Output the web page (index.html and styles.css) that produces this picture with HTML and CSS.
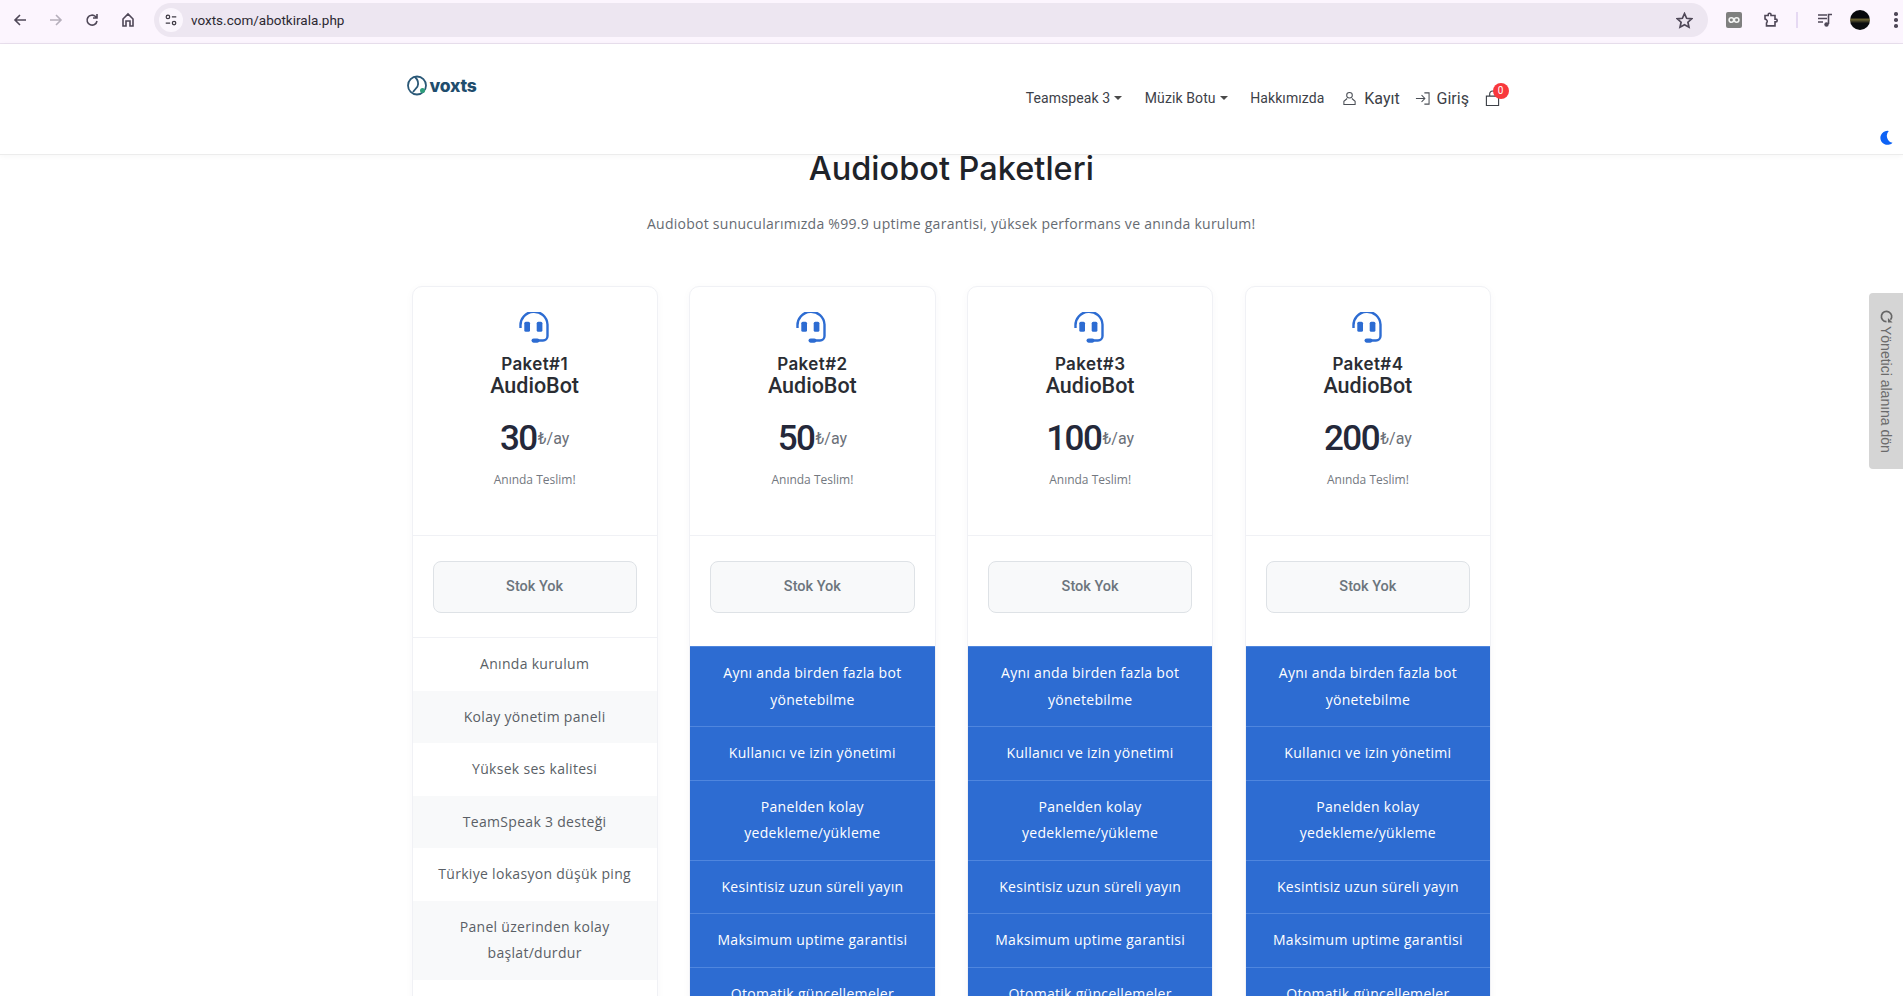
FILE: index.html
```html
<!DOCTYPE html>
<html lang="tr">
<head>
  <meta charset="UTF-8">
  <title>Audiobot Paketleri - voxts</title>
  <link rel="stylesheet" href="styles.css">
</head>
<body>
  <!-- browser chrome -->
  <div class="browser-bar">
    <div class="browser-nav">
      <svg class="bicon" viewBox="0 0 16 16"><path d="M14 8H3M8 3 3 8l5 5"/></svg>
      <svg class="bicon faded" viewBox="0 0 16 16"><path d="M2 8h11M8 3l5 5-5 5"/></svg>
      <svg class="bicon" viewBox="0 0 16 16"><path d="M13 9a5 5 0 1 1-1.5-4.5L13 6M13 2v4H9"/></svg>
      <svg class="bicon" viewBox="0 0 16 16"><path d="M3 14V7l5-5 5 5v7h-3V9H6v5z"/></svg>
    </div>
    <div class="address">
      <span class="site-info">
        <svg viewBox="0 0 16 16"><circle cx="4.5" cy="4.5" r="2"/><path d="M9 4.5h5M2 11.5h5"/><circle cx="11.5" cy="11.5" r="2"/></svg>
      </span>
      <span class="url">voxts.com/abotkirala.php</span>
      <svg class="bicon star" viewBox="0 0 16 16"><path d="m8 1.500 2 4.400 4.700.5-3.500 3.200 1 4.700L8 11.900l-4.200 2.400 1-4.700-3.500-3.200L6 5.900z"/></svg>
    </div>
    <div class="browser-tools">
      <span class="ext-box"><svg viewBox="0 0 16 16"><circle cx="5" cy="8" r="2.600"/><circle cx="11" cy="8" r="2.600"/></svg></span>
      <svg class="bicon puzzle" viewBox="0 0 16 16"><path d="M2 3.500h3.200V2.600a1.400 1.400 0 0 1 2.800 0v.9h4v3.600h.8a1.400 1.400 0 0 1 0 2.800H12v4H3.500V11c1-.8 1-2.500 0-3.200L2 7z"/></svg>
      <span class="tool-sep"></span>
      <svg class="bicon music" viewBox="0 0 16 16"><path d="M1 3h9M1 6.500h9M1 10h5M11.500 12V2.500H15"/><circle cx="9.500" cy="12.500" r="2.200"/></svg>
      <span class="avatar"></span>
      <span class="dots"><i></i><i></i><i></i></span>
    </div>
  </div>

  <header class="site-header">
    <div class="header-inner">
      <a class="logo" href="#">
        <svg viewBox="0 0 20 22"><circle cx="10" cy="10.500" r="9"/><path d="M8 2c3 3 4 6 2.500 9.500L6 17"/><circle class="logo-dot" cx="15.500" cy="15.500" r="2.500"/></svg>
        <span>voxts</span>
      </a>
      <nav class="main-nav">
        <a href="#" class="nav-link caret">Teamspeak 3</a>
        <a href="#" class="nav-link caret">Müzik Botu</a>
        <a href="#" class="nav-link">Hakkımızda</a>
        <a href="#" class="nav-link big signup">
          <svg viewBox="0 0 16 16"><circle cx="8" cy="4.500" r="3"/><path d="M5.500 8 2 11v3.500h12V11l-3.500-3"/></svg>Kayıt
        </a>
        <a href="#" class="nav-link big login">
          <svg viewBox="0 0 16 16"><path d="M1 8h9M7 4.500 10.500 8 7 11.500M10 2h5v12h-5"/></svg>Giriş
        </a>
        <a href="#" class="cart">
          <svg viewBox="0 0 16 18"><path d="M1.500 6.500h13v10h-13zM5 6.500V4a3 3 0 0 1 6 0v2.500"/></svg>
          <span class="cart-badge">0</span>
        </a>
      </nav>
    </div>
  </header>

  <button class="theme-toggle" type="button" aria-label="Tema">
    <svg viewBox="0 0 16 16"><path d="M11.500 1A7.500 7.500 0 1 0 15.500 13.500 7.500 7.500 0 0 1 11.500 1z"/></svg>
  </button>

  <a href="#" class="admin-tab">
    <svg viewBox="0 0 16 16"><path d="M13.500 8A5.500 5.500 0 1 1 11.500 3.700"/><path class="fill" d="M14.500 1.500v5h-5z"/></svg>
    <span>Yönetici alanına dön</span>
  </a>

  <main class="page">
    <h1 class="page-title">Audiobot Paketleri</h1>
    <p class="page-sub">Audiobot sunucularımızda %99.9 uptime garantisi, yüksek performans ve anında kurulum!</p>

    <div class="plans">
      <div class="plan">
        <div class="plan-head">
          <svg class="plan-icon" viewBox="0 0 32 32"><use href="#headset"/></svg>
          <div class="plan-no">Paket#1</div>
          <div class="plan-name">AudioBot</div>
          <div class="plan-price"><b>30</b>₺/ay</div>
          <div class="plan-note">Anında Teslim!</div>
        </div>
        <div class="plan-buy"><span class="stock-btn">Stok Yok</span></div>
        <ul class="features">
          <li>Anında kurulum</li>
          <li>Kolay yönetim paneli</li>
          <li>Yüksek ses kalitesi</li>
          <li>TeamSpeak 3 desteği</li>
          <li>Türkiye lokasyon düşük ping</li>
          <li>Panel üzerinden kolay başlat/durdur</li>
        </ul>
      </div>

      <div class="plan plan-pro">
        <div class="plan-head">
          <svg class="plan-icon" viewBox="0 0 32 32"><use href="#headset"/></svg>
          <div class="plan-no">Paket#2</div>
          <div class="plan-name">AudioBot</div>
          <div class="plan-price"><b>50</b>₺/ay</div>
          <div class="plan-note">Anında Teslim!</div>
        </div>
        <div class="plan-buy"><span class="stock-btn">Stok Yok</span></div>
        <ul class="features">
          <li>Aynı anda birden fazla bot yönetebilme</li>
          <li>Kullanıcı ve izin yönetimi</li>
          <li>Panelden kolay yedekleme/yükleme</li>
          <li>Kesintisiz uzun süreli yayın</li>
          <li>Maksimum uptime garantisi</li>
          <li>Otomatik güncellemeler</li>
        </ul>
      </div>

      <div class="plan plan-pro">
        <div class="plan-head">
          <svg class="plan-icon" viewBox="0 0 32 32"><use href="#headset"/></svg>
          <div class="plan-no">Paket#3</div>
          <div class="plan-name">AudioBot</div>
          <div class="plan-price"><b>100</b>₺/ay</div>
          <div class="plan-note">Anında Teslim!</div>
        </div>
        <div class="plan-buy"><span class="stock-btn">Stok Yok</span></div>
        <ul class="features">
          <li>Aynı anda birden fazla bot yönetebilme</li>
          <li>Kullanıcı ve izin yönetimi</li>
          <li>Panelden kolay yedekleme/yükleme</li>
          <li>Kesintisiz uzun süreli yayın</li>
          <li>Maksimum uptime garantisi</li>
          <li>Otomatik güncellemeler</li>
        </ul>
      </div>

      <div class="plan plan-pro">
        <div class="plan-head">
          <svg class="plan-icon" viewBox="0 0 32 32"><use href="#headset"/></svg>
          <div class="plan-no">Paket#4</div>
          <div class="plan-name">AudioBot</div>
          <div class="plan-price"><b>200</b>₺/ay</div>
          <div class="plan-note">Anında Teslim!</div>
        </div>
        <div class="plan-buy"><span class="stock-btn">Stok Yok</span></div>
        <ul class="features">
          <li>Aynı anda birden fazla bot yönetebilme</li>
          <li>Kullanıcı ve izin yönetimi</li>
          <li>Panelden kolay yedekleme/yükleme</li>
          <li>Kesintisiz uzun süreli yayın</li>
          <li>Maksimum uptime garantisi</li>
          <li>Otomatik güncellemeler</li>
        </ul>
      </div>
    </div>
  </main>

  <svg class="sprite" aria-hidden="true">
    <symbol id="headset" viewBox="0 0 32 32">
      <path d="M1.500 16v-2a13.500 13.500 0 0 1 27-1.500V24a4.500 4.500 0 0 1-4.500 4.500h-5" fill="none" stroke="currentColor" stroke-width="2.400"/>
      <rect x="5.300" y="9.700" width="5.700" height="10" rx="1.500" fill="currentColor"/>
      <rect x="17.700" y="9.700" width="5.700" height="10" rx="1.500" fill="currentColor"/>
      <rect x="12.500" y="26.500" width="8" height="4.200" rx="2.100" fill="currentColor"/>
    </symbol>
  </svg>
</body>
</html>
```

FILE: styles.css
```css
:root {
  --blue: #2d6cd2; --blue-line: #4f86de; --text-dark: #2b2f36; --text-main: #5a5f66;
  --text-muted: #6c757d; --border-color: #f0f1f5; --chrome-bg: #fcf5fe; --chrome-pill: #ede6f1;
}
html { box-sizing: border-box; }
*, *:before, *:after { box-sizing: inherit; }
body {
  margin: 0; height: 100vh; overflow: hidden; background: #fff; color: var(--text-main);
  font-family: "Open Sans", Arial, sans-serif; position: relative;
}
a { text-decoration: none; color: inherit; }
.sprite { width: 0; height: 0; display: block; }

/* browser chrome */
.browser-bar {
  height: 44px; display: flex; align-items: center; background: var(--chrome-bg);
  border-bottom: 1px solid #e9e0ee; padding: 0 0 3px 12px;
}
.bicon { width: 16px; height: 16px; fill: none; stroke: #4f4858; stroke-width: 1.600; flex-shrink: 0; }
.bicon.faded { stroke: #b5afbb; }
.browser-nav { display: flex; gap: 20px; width: 142px; }
.address {
  width: 1554px; height: 34px; border-radius: 17px; background: var(--chrome-pill);
  display: flex; align-items: center; padding: 0 15px 0 5px;
}
.site-info {
  width: 24px; height: 24px; border-radius: 50%; background: #fbf6fd;
  display: flex; align-items: center; justify-content: center;
}
.site-info svg { width: 14px; height: 14px; fill: none; stroke: #3e3a44; stroke-width: 1.400; }
.url { margin-left: 8px; font: 13.500px Roboto, Arial, sans-serif; color: #2c2832; flex: 1; }
.star { width: 17px; height: 17px; }
.browser-tools { display: flex; align-items: center; padding-left: 18px; }
.ext-box {
  width: 16px; height: 16px; border-radius: 2px; background: #7f7f7f;
  display: flex; align-items: center; justify-content: center;
}
.ext-box svg { width: 14px; height: 14px; fill: none; stroke: #f4f4f4; stroke-width: 1.800; }
.puzzle { margin-left: 21px; }
.tool-sep { width: 2px; height: 16px; background: #e6d9f3; margin: 0 19px 0 17px; }
.music circle { fill: #4f4858; stroke: none; }
.avatar {
  width: 20px; height: 20px; border-radius: 50%; margin-left: 17px;
  background: linear-gradient(#07090c 38%, #6a6232 48%, #4b4628 54%, #0a0c0f 66%);
}
.dots { display: flex; flex-direction: column; gap: 2.500px; margin-left: 24px; }
.dots i { width: 3.500px; height: 3.500px; border-radius: 50%; background: #4f4858; }

/* site header */
.site-header {
  height: 111px; background: #fff; border-bottom: 1px solid #ececec;
  box-shadow: 0 1px 6px rgba(0, 0, 0, 0.04); position: relative; z-index: 2;
}
.header-inner { width: 1110px; margin: 0 auto; display: flex; justify-content: space-between; padding: 31px 7px 0 10px; }
.logo { display: flex; align-items: center; gap: 3px; height: 21px; color: #1f4d6d; font: 800 17.500px Inter, Arial, sans-serif; letter-spacing: -0.2px; }
.logo svg { width: 20px; height: 22px; fill: none; stroke: #2a5877; stroke-width: 1.800; }
.logo svg .logo-dot { fill: #2f9e7b; stroke: none; }
.main-nav { display: flex; align-items: center; gap: 22.500px; height: 46px; font: 14px Roboto, Arial, sans-serif; color: #3d4148; }
.nav-link { display: flex; align-items: center; gap: 8px; white-space: nowrap; letter-spacing: 0.100px; }
.nav-link.caret:after {
  content: ""; border-top: 4px solid #4a4a4a; border-left: 4px solid transparent;
  border-right: 4px solid transparent; margin-left: -4px;
}
.nav-link.big { font-size: 16px; gap: 7px; letter-spacing: 0; }
.nav-link.signup { margin-left: -4.700px; }
.nav-link.login { margin-left: -7.700px; }
.nav-link svg { width: 15px; height: 15px; fill: none; stroke: #4a4e55; stroke-width: 1.100; }
.cart { position: relative; display: flex; margin-left: -6.900px; }
.cart svg { width: 15px; height: 17px; fill: none; stroke: #3d4148; stroke-width: 1.200; }
.cart-badge {
  position: absolute; top: -7px; left: 8px; width: 16px; height: 16px; border-radius: 50%;
  background: #f8383c; color: #fff; font-size: 10px; line-height: 16px; text-align: center;
}
.theme-toggle {
  position: absolute; top: 118px; right: 0; width: 35px; height: 36px; background: #fff;
  border: 0; padding: 0; z-index: 3; display: flex; align-items: center; justify-content: center;
}
.theme-toggle svg { width: 15px; height: 15px; fill: #0d62f5; margin: 2px 0 0; }
.admin-tab {
  position: absolute; top: 293px; right: 0; width: 34px; height: 176px; z-index: 3;
  background: #d5d5d5; border-radius: 4px 0 0 4px; color: #6b6b6b;
  font: 14px "Liberation Sans", Arial, sans-serif;
  display: flex; flex-direction: column; align-items: center; padding-top: 16px; gap: 2px;
}
.admin-tab span { writing-mode: vertical-rl; }
.admin-tab svg { width: 15px; height: 15px; fill: none; stroke: #666; stroke-width: 1.800; transform: rotate(90deg); }
.admin-tab svg .fill { fill: #666; stroke: none; }

/* page */
.page { width: 1080px; margin: 0 auto; padding-right: 0.500px; }
.page-title { margin: 1px 0 0; text-align: center; font: 500 32.500px/26px Inter, Arial, sans-serif; color: #1f2329; }
.page-sub { margin: 30px 0 0; text-align: center; font-size: 14px; line-height: 24px; letter-spacing: 0.260px; color: #666b72; }
.plans { display: grid; grid-template-columns: repeat(4, 1fr); gap: 31.500px; margin-top: 50px; }
.plan {
  background: #fff; border: 1px solid var(--border-color); border-radius: 10px;
  box-shadow: 0 2px 10px rgba(40, 50, 90, 0.03); overflow: hidden;
}
.plan-head { height: 249px; text-align: center; padding-top: 25px; border-bottom: 1px solid var(--border-color); }
.plan-icon { width: 32px; height: 32px; color: var(--blue); display: block; margin: 0 auto; }
.plan-no { margin-top: 10px; font: 600 17px/20px Inter, Arial, sans-serif; letter-spacing: 0.400px; color: #2a2d33; }
.plan-name { font: 500 21.500px/24px Roboto, Arial, sans-serif; color: #2a2d33; }
.plan-price {
  margin-top: 21px; height: 40px; display: flex; justify-content: center; align-items: center;
  font: 16px/40px Roboto, Arial, sans-serif; color: #6b7078;
}
.plan-price b { font: 500 35px/40px Roboto, Arial, sans-serif; letter-spacing: -1.500px; margin-right: 1px; color: #24283a; }
.plan-note { margin-top: 12px; font-size: 12px; line-height: 18px; color: #737880; }
.plan-buy { padding: 25px 20px 24px; border-bottom: 1px solid var(--border-color); }
.plan-pro .plan-buy { padding-bottom: 33px; border-bottom: 0; }
.stock-btn {
  display: block; height: 52px; text-align: center; background: #f8f9fa;
  border: 1px solid #dee2e6; border-radius: 8px; color: var(--text-muted);
  font: 500 14.500px/50px Roboto, Arial, sans-serif;
}
.features { list-style: none; margin: 0; padding: 0; }
.features li { padding: 13px 20px; font-size: 14px; line-height: 26.500px; text-align: center; letter-spacing: 0.300px; }
.features li:nth-child(even) { background: #f8f9fa; }
.plan-pro .features { background: var(--blue); color: #fff; }
.plan-pro .features li { background: var(--blue); border-top: 1px solid var(--blue-line); }
```
